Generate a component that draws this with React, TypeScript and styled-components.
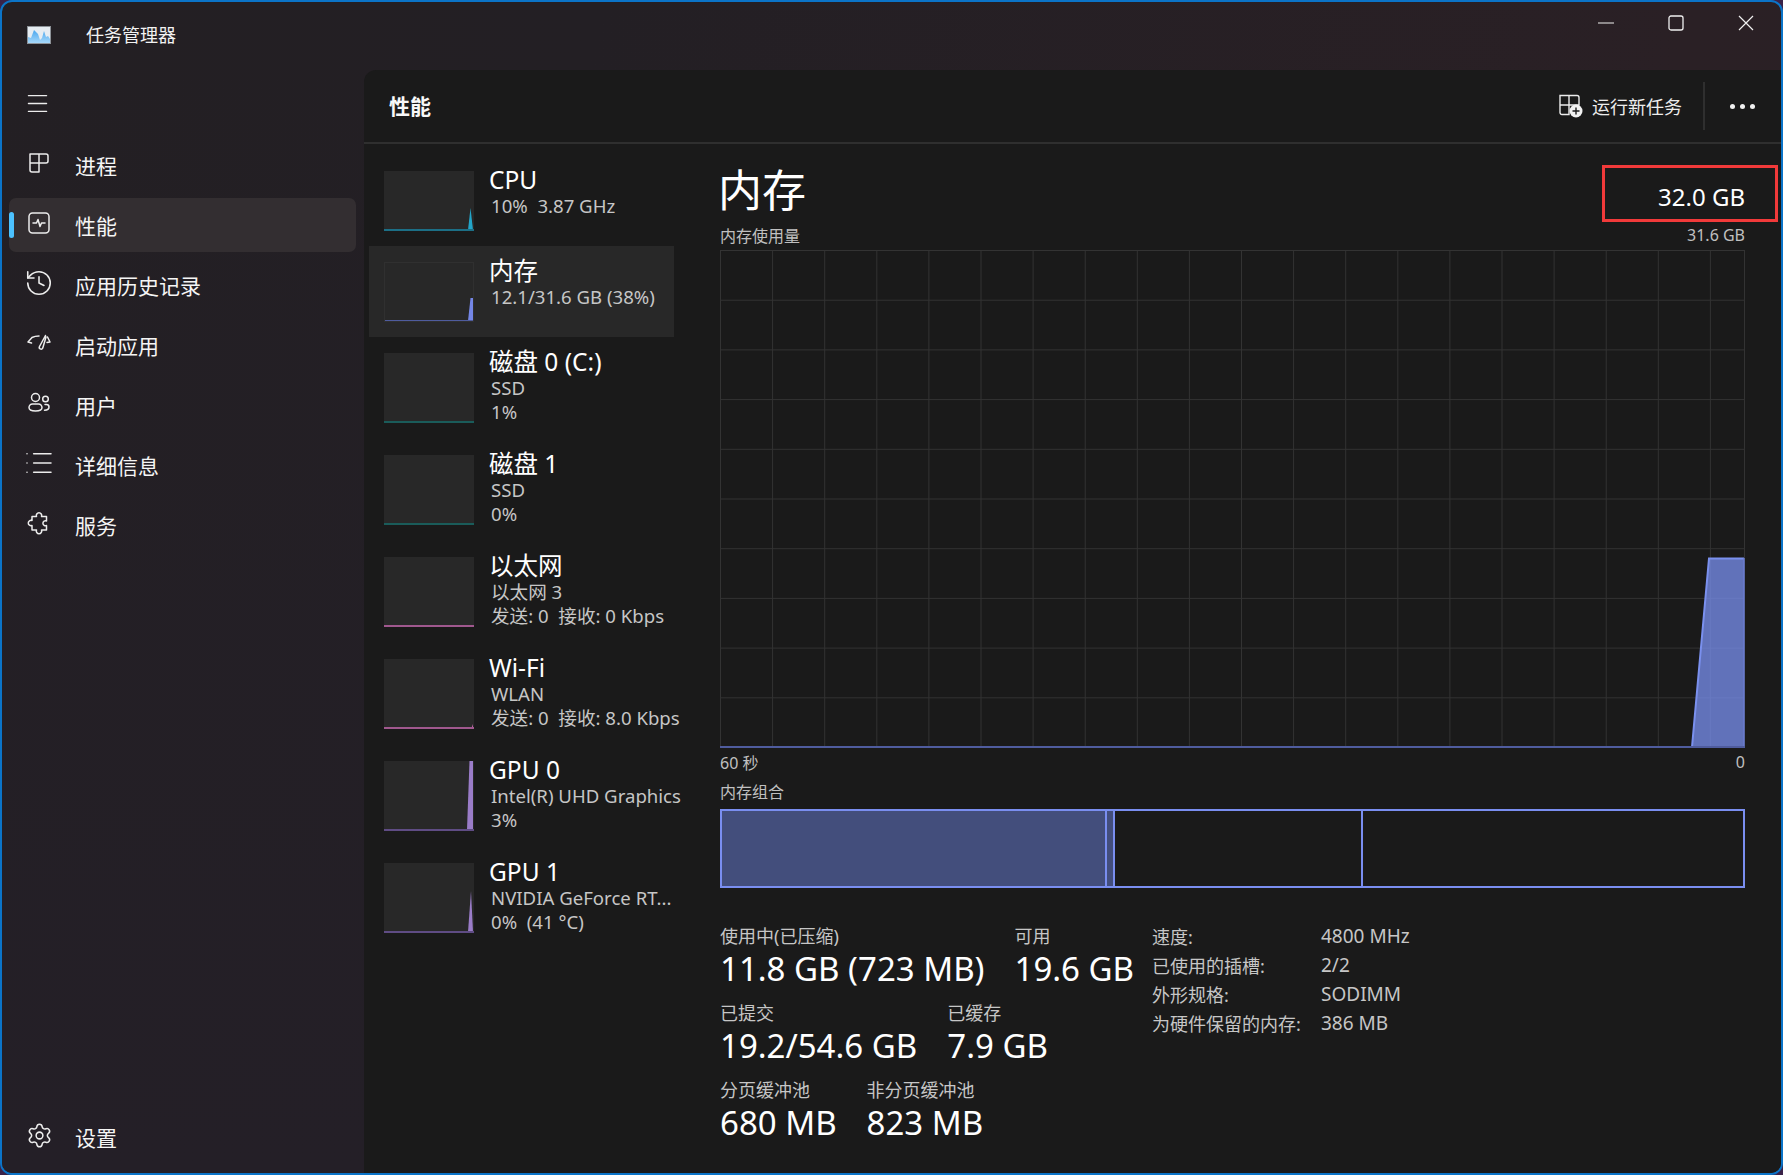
import React from 'react'
import styled, { createGlobalStyle } from 'styled-components'
import { History, List, Settings, Menu } from 'lucide-react'

const GlobalStyle = createGlobalStyle`
    html, body {
        margin: 0;
        padding: 0;
        background: #3a2248;
        overflow: hidden;
    }
    * {
        box-sizing: border-box;
    }
`

type NavEntry = {
    label: string;
    icon: React.ReactNode;
    active?: boolean;
};

type DeviceEntry = {
    name: string;
    lines: Array<string>;
    color: string;
    fill: string;
    points?: string;
    selected?: boolean;
};

const strokeIcon = (children: React.ReactNode) => (
    <svg width="24" height="24" viewBox="0 0 24 24" fill="none" stroke="#ececec" strokeWidth="1.5" strokeLinecap="round" strokeLinejoin="round">
        {children}
    </svg>
)

const navItems: Array<NavEntry> = [
    { label: '进程', icon: strokeIcon(<path d="M3 3h9v18H5a2 2 0 0 1-2-2V3zM3 12h9M12 3h7a2 2 0 0 1 2 2v5a2 2 0 0 1-2 2h-7" />) },
    {
        label: '性能',
        active: true,
        icon: strokeIcon(<>
            <rect x="2" y="2" width="20" height="20" rx="3.5" />
            <polyline points="6,12 9.5,12 11,8.5 13,15.5 14.5,12 18,12" />
        </>),
    },
    { label: '应用历史记录', icon: <History size={30} color="#ececec" strokeWidth={1.25} /> },
    {
        label: '启动应用',
        icon: strokeIcon(<>
            <path d="M1 11l4-4.5c2-1 4-1.5 7-1.5M1 11l3.5 1" />
            <path d="M18.5 4.5 12.5 15.5a1.8 1.8 0 0 0 3.2 1.7L19 6" />
            <path d="M20.5 6 23 11l-3 .5" />
        </>),
    },
    {
        label: '用户',
        icon: strokeIcon(<>
            <circle cx="8.5" cy="6.5" r="4" />
            <path d="M2 16.5a3.5 3.5 0 0 1 3.5-3.5h6a3.5 3.5 0 0 1 3.5 3.5c0 2.2-3 3.5-6.5 3.5S2 18.7 2 16.5z" />
            <circle cx="18.5" cy="8" r="2.8" />
            <path d="M18 13.5h1.5a2.5 2.5 0 0 1 2.5 2.5c0 2-2.2 3.2-4.5 3.2" />
        </>),
    },
    { label: '详细信息', icon: <List size={32} color="#ececec" strokeWidth={1.15} /> },
    {
        label: '服务',
        icon: strokeIcon(<path d="M9.5 5.5a2.7 2.7 0 1 1 5 0H19.5V10a2.5 2.5 0 1 0 0 4.5V19H14.5a2.7 2.7 0 1 1-5 0H5V14.5a2.7 2.7 0 1 1 0-5V5.5z" />),
    },
]

const devices: Array<DeviceEntry> = [
    { name: 'CPU', lines: ['10%  3.87 GHz'], color: '#1c6f86', fill: '#22a5c9', points: '84,59 86.5,37 89,59' },
    { name: '内存', lines: ['12.1/31.6 GB (38%)'], color: '#4f5c9e', fill: '#7486e6', points: '84,59 86.5,36 89,36 89,59', selected: true },
    { name: '磁盘 0 (C:)', lines: ['SSD', '1%'], color: '#1a5c5a', fill: '#1a5c5a' },
    { name: '磁盘 1', lines: ['SSD', '0%'], color: '#1a5c5a', fill: '#1a5c5a' },
    { name: '以太网', lines: ['以太网 3', '发送: 0  接收: 0 Kbps'], color: '#a0588e', fill: '#a0588e' },
    { name: 'Wi-Fi', lines: ['WLAN', '发送: 0  接收: 8.0 Kbps'], color: '#a0588e', fill: '#c468ac', points: '87.5,69 89,65 89,69' },
    { name: 'GPU 0', lines: ['Intel(R) UHD Graphics', '3%'], color: '#5f4c84', fill: '#9a7cc8', points: '83,69 85.5,0 89,0 89,69' },
    { name: 'GPU 1', lines: ['NVIDIA GeForce RT...', '0%  (41 °C)'], color: '#5f4c84', fill: '#9a7cc8', points: '84,69 87,28 89,69' },
]

const verticalGrid = Array.from({ length: 20 }, (_, i) => i * 52.1)
const horizontalGrid = Array.from({ length: 10 }, (_, i) => i * 49.7)

function Thumbnail({ device }: { device: DeviceEntry }) {
    const height = device.lines.length > 1 ? 70 : 60
    return (
        <Thumb $height={height} $selected={device.selected}>
            <svg width="90" height={height} viewBox={`0 0 90 ${height}`}>
                {device.points && <polygon points={device.points} fill={device.fill} />}
                <line x1="0" y1={height - 1} x2="90" y2={height - 1} stroke={device.color} strokeWidth="2" />
            </svg>
        </Thumb>
    )
}

function MemoryGraph() {
    return (
        <svg width="1025" height="498" viewBox="0 0 1025 498">
            {verticalGrid.map((x) => (
                <line key={x} x1={x + 0.5} y1="0" x2={x + 0.5} y2="497" stroke="#333333" strokeWidth="1" />
            ))}
            <line x1="1024.5" y1="0" x2="1024.5" y2="497" stroke="#333333" strokeWidth="1" />
            {horizontalGrid.map((y) => (
                <line key={y} x1="0" y1={y + 0.5} x2="1025" y2={y + 0.5} stroke="#333333" strokeWidth="1" />
            ))}
            <polygon points="972,497 989,308.5 1024,308.5 1024,497" fill="#7a90f0" fillOpacity="0.75" />
            <polyline points="972,497 989,308.5 1024,308.5" fill="none" stroke="#7a90ee" strokeWidth="2" />
            <line x1="1024" y1="308" x2="1024" y2="497" stroke="#6a7dd0" strokeWidth="1.5" />
            <line x1="0" y1="497" x2="1025" y2="497" stroke="#4f5c9e" strokeWidth="2" />
        </svg>
    )
}

export default function App() {
    return (
        <Window>
            <GlobalStyle />
            <TitleBar>
                <AppIcon>
                    <svg width="24" height="18" viewBox="0 0 24 18">
                        <defs>
                            <linearGradient id="logoFill" x1="0" y1="0" x2="0" y2="1">
                                <stop offset="0" stopColor="#4aa6ee" />
                                <stop offset="1" stopColor="#a6d8fa" />
                            </linearGradient>
                        </defs>
                        <rect x="0.5" y="0.5" width="23" height="17" fill="#e6ecf2" stroke="#8d9298" />
                        <polygon points="1,17 1,11 4,12 7,4 9,6 11,8 13,14 15,12 17,5 19,11 21,10 23,13 23,17" fill="url(#logoFill)" />
                    </svg>
                </AppIcon>
                <AppTitle>任务管理器</AppTitle>
                <WindowControls>
                    <ControlButton>
                        <svg width="16" height="16" viewBox="0 0 16 16"><line x1="0" y1="8" x2="16" y2="8" stroke="#f0f0f0" strokeWidth="1.2" /></svg>
                    </ControlButton>
                    <ControlButton>
                        <svg width="16" height="16" viewBox="0 0 16 16"><rect x="1" y="1" width="14" height="14" rx="2" fill="none" stroke="#f0f0f0" strokeWidth="1.3" /></svg>
                    </ControlButton>
                    <ControlButton>
                        <svg width="16" height="16" viewBox="0 0 16 16"><path d="M1 1l14 14M15 1L1 15" stroke="#f0f0f0" strokeWidth="1.2" /></svg>
                    </ControlButton>
                </WindowControls>
            </TitleBar>
            <Body>
                <Sidebar>
                    <Hamburger><Menu size={27} color="#ececec" strokeWidth={1.3} /></Hamburger>
                    <NavList>
                        {navItems.map((item) => (
                            <NavItem key={item.label} $active={item.active}>
                                <NavIcon>{item.icon}</NavIcon>
                                <span>{item.label}</span>
                            </NavItem>
                        ))}
                    </NavList>
                    <SettingsSlot>
                        <NavItem>
                            <NavIcon><Settings size={27} color="#ececec" strokeWidth={1.35} /></NavIcon>
                            <span>设置</span>
                        </NavItem>
                    </SettingsSlot>
                </Sidebar>
                <Panel>
                    <PanelHeader>
                        <PanelTitle>性能</PanelTitle>
                        <RunTask>
                            <svg width="24" height="24" viewBox="0 0 24 24" fill="none">
                                <path d="M1 1.5h9v19H3a2 2 0 0 1-2-2V1.5zM1 11h9M10 1.5h8a2 2 0 0 1 2 2V11h-10" stroke="#ececec" strokeWidth="1.4" />
                                <circle cx="17" cy="17" r="6.5" fill="#f2f2f2" />
                                <path d="M17 13.5v7M13.5 17h7" stroke="#1a1a1a" strokeWidth="1.4" />
                            </svg>
                            <span>运行新任务</span>
                        </RunTask>
                        <HeaderDivider />
                        <MoreDots><Dot /><Dot /><Dot /></MoreDots>
                    </PanelHeader>
                    <PanelBody>
                        <DeviceList>
                            {devices.map((device) => (
                                <DeviceRow key={device.name} $selected={device.selected} $tall={device.lines.length > 1}>
                                    <Thumbnail device={device} />
                                    <DeviceText>
                                        <DeviceName>{device.name}</DeviceName>
                                        {device.lines.map((line) => (
                                            <DeviceLine key={line}>{line}</DeviceLine>
                                        ))}
                                    </DeviceText>
                                </DeviceRow>
                            ))}
                        </DeviceList>
                        <Detail>
                            <HeadingRow>
                                <Heading>内存</Heading>
                                <Capacity>32.0 GB</Capacity>
                                <RedBox />
                            </HeadingRow>
                            <CaptionRow>
                                <span>内存使用量</span>
                                <span>31.6 GB</span>
                            </CaptionRow>
                            <GraphFrame><MemoryGraph /></GraphFrame>
                            <AxisRow>
                                <span>60 秒</span>
                                <span>0</span>
                            </AxisRow>
                            <CompositionLabel>内存组合</CompositionLabel>
                            <CompositionBar>
                                <BarSegment $width={385} $used />
                                <BarSegment $width={8} $used />
                                <BarSegment $width={248} />
                                <BarSegment $grow />
                            </CompositionBar>
                            <Stats>
                                <StatColumn>
                                    <StatRow>
                                        <Stat><StatLabel>使用中(已压缩)</StatLabel><StatValue>11.8 GB (723 MB)</StatValue></Stat>
                                        <Stat><StatLabel>可用</StatLabel><StatValue>19.6 GB</StatValue></Stat>
                                    </StatRow>
                                    <StatRow>
                                        <Stat><StatLabel>已提交</StatLabel><StatValue>19.2/54.6 GB</StatValue></Stat>
                                        <Stat><StatLabel>已缓存</StatLabel><StatValue>7.9 GB</StatValue></Stat>
                                    </StatRow>
                                    <StatRow>
                                        <Stat><StatLabel>分页缓冲池</StatLabel><StatValue>680 MB</StatValue></Stat>
                                        <Stat><StatLabel>非分页缓冲池</StatLabel><StatValue>823 MB</StatValue></Stat>
                                    </StatRow>
                                </StatColumn>
                                <Properties>
                                    <span>速度:</span><PropValue>4800 MHz</PropValue>
                                    <span>已使用的插槽:</span><PropValue>2/2</PropValue>
                                    <span>外形规格:</span><PropValue>SODIMM</PropValue>
                                    <span>为硬件保留的内存:</span><PropValue>386 MB</PropValue>
                                </Properties>
                            </Stats>
                        </Detail>
                    </PanelBody>
                </Panel>
            </Body>
        </Window>
    )
}

const Window = styled.div`
    width: 1783px;
    height: 1175px;
    display: flex;
    flex-direction: column;
    border: 2px solid #0b74c8;
    border-radius: 12px;
    overflow: hidden;
    background: linear-gradient(100deg, #231f23 0%, #231f24 30%, #2a2025 85%, #2a2024 100%);
    color: #ffffff;
    font-family: "Noto Sans", "Noto Sans CJK SC", sans-serif;
`

const TitleBar = styled.div`
    height: 68px;
    display: flex;
    align-items: center;
    padding-left: 25px;
    flex-shrink: 0;
`

const AppIcon = styled.div`
    width: 24px;
    height: 18px;
    display: flex;
    margin-top: -2px;
`

const AppTitle = styled.div`
    margin-left: 35px;
    font-size: 18px;
    margin-top: -4px;
    color: #f2f2f2;
`

const WindowControls = styled.div`
    margin-left: auto;
    display: flex;
    align-self: flex-start;
    padding-top: 13px;
    padding-right: 27px;
    gap: 54px;
`

const ControlButton = styled.div`
    width: 16px;
    height: 16px;
    display: flex;
`

const Body = styled.div`
    flex: 1;
    display: flex;
    min-height: 0;
`

const Sidebar = styled.div`
    width: 362px;
    flex-shrink: 0;
    display: flex;
    flex-direction: column;
    padding: 0 7px 9px;
    background: linear-gradient(180deg, transparent 0%, #241f27 100%);
`

const Hamburger = styled.div`
    height: 68px;
    padding: 0 0 2px 15px;
    display: flex;
    align-items: center;
`

const NavList = styled.div`
    display: flex;
    flex-direction: column;
    gap: 6px;
`

const NavItem = styled.div<{ $active?: boolean }>`
    position: relative;
    width: 347px;
    height: 54px;
    display: flex;
    align-items: center;
    padding-left: 18px;
    gap: 24px;
    font-size: 21px;
    color: #f5f5f5;
    border-radius: 7px;
    background: ${(p) => (p.$active ? '#332e31' : 'transparent')};
    &::before {
        content: '';
        display: ${(p) => (p.$active ? 'block' : 'none')};
        position: absolute;
        left: 0;
        top: 14px;
        bottom: 14px;
        width: 5px;
        border-radius: 3px;
        background: #4cc2ff;
    }
`

const NavIcon = styled.div`
    width: 24px;
    height: 26px;
    display: flex;
    align-items: center;
    justify-content: center;
    margin-top: -4px;
    svg {
        flex-shrink: 0;
    }
`

const SettingsSlot = styled.div`
    margin-top: auto;
`

const Panel = styled.div`
    flex: 1;
    display: flex;
    flex-direction: column;
    background: #1a1a1a;
    border-top-left-radius: 12px;
    min-width: 0;
`

const PanelHeader = styled.div`
    height: 74px;
    display: flex;
    align-items: center;
    padding: 0 0 0 25px;
    border-bottom: 2px solid #2f2f2f;
`

const PanelTitle = styled.div`
    font-size: 21px;
    font-weight: 600;
    margin-top: -2px;
    color: #f8f8f8;
`

const RunTask = styled.div`
    margin-left: auto;
    display: flex;
    align-items: center;
    gap: 9px;
    font-size: 18px;
    color: #ededed;
`

const HeaderDivider = styled.div`
    width: 2px;
    height: 48px;
    margin-left: 21px;
    background: #2f2f2f;
`

const MoreDots = styled.div`
    display: flex;
    gap: 5px;
    margin-left: 25px;
    margin-right: 26px;
`

const Dot = styled.div`
    width: 5px;
    height: 5px;
    border-radius: 50%;
    background: #f0f0f0;
`

const PanelBody = styled.div`
    flex: 1;
    display: flex;
    min-height: 0;
`

const DeviceList = styled.div`
    width: 356px;
    flex-shrink: 0;
    padding: 11px 0 0 5px;
    display: flex;
    flex-direction: column;
`

const DeviceRow = styled.div<{ $selected?: boolean; $tall?: boolean }>`
    width: 305px;
    height: ${(p) => (p.$tall ? 102 : 91)}px;
    display: flex;
    padding-left: 15px;
    background: ${(p) => (p.$selected ? '#282828' : 'transparent')};
`

const Thumb = styled.div<{ $height: number; $selected?: boolean }>`
    width: 90px;
    height: ${(p) => p.$height}px;
    margin-top: 16px;
    flex-shrink: 0;
    display: flex;
    background: #282828;
    outline: ${(p) => (p.$selected ? '1px solid #303030' : 'none')};
    outline-offset: -1px;
`

const DeviceText = styled.div`
    padding: 12px 0 0 15px;
    white-space: pre;
`

const DeviceName = styled.div`
    font-size: 24.5px;
    line-height: 26px;
    margin-bottom: 1px;
    color: #ffffff;
`

const DeviceLine = styled.div`
    font-size: 18.6px;
    line-height: 24px;
    padding-left: 2px;
    color: #c6c6c6;
`

const Detail = styled.div`
    width: 1025px;
    flex-shrink: 0;
    padding-top: 22px;
    display: flex;
    flex-direction: column;
`

const HeadingRow = styled.div`
    position: relative;
    height: 48px;
    display: flex;
    align-items: center;
    justify-content: space-between;
`

const Heading = styled.div`
    font-size: 44px;
    line-height: 48px;
    margin-left: -2px;
    color: #ffffff;
`

const Capacity = styled.div`
    font-size: 24px;
    margin-top: 12px;
    color: #ffffff;
`

const RedBox = styled.div`
    position: absolute;
    right: -33px;
    top: -1px;
    width: 176px;
    height: 57px;
    border: 3px solid #f23a3a;
`

const CaptionRow = styled.div`
    height: 22px;
    margin-top: 10px;
    margin-bottom: 4px;
    display: flex;
    align-items: center;
    justify-content: space-between;
    font-size: 16px;
    color: #c0c0c0;
`

const GraphFrame = styled.div`
    width: 1025px;
    height: 498px;
    display: flex;
`

const AxisRow = styled.div`
    height: 22px;
    margin-top: 3px;
    display: flex;
    align-items: center;
    justify-content: space-between;
    font-size: 16px;
    color: #c0c0c0;
`

const CompositionLabel = styled.div`
    height: 22px;
    margin-top: 7px;
    display: flex;
    align-items: center;
    font-size: 16px;
    color: #c0c0c0;
`

const CompositionBar = styled.div`
    height: 79px;
    margin-top: 7px;
    display: flex;
    border: 2px solid #7a8ef0;
`

const BarSegment = styled.div<{ $width?: number; $used?: boolean; $grow?: boolean }>`
    ${(p) => (p.$grow ? 'flex: 1;' : `width: ${p.$width}px;`)}
    background: ${(p) => (p.$used ? '#434e7c' : 'transparent')};
    &:not(:last-child) {
        border-right: 2px solid #7a8ef0;
    }
`

const Stats = styled.div`
    margin-top: 35px;
    display: flex;
`

const StatColumn = styled.div`
    width: 432px;
    display: flex;
    flex-direction: column;
    gap: 11px;
`

const StatRow = styled.div`
    display: flex;
    gap: 30px;
`

const Stat = styled.div`
    display: flex;
    flex-direction: column;
`

const StatLabel = styled.div`
    font-size: 18px;
    line-height: 26px;
    color: #c6c6c6;
`

const StatValue = styled.div`
    font-size: 33px;
    line-height: 40px;
    color: #ffffff;
    white-space: nowrap;
`

const Properties = styled.div`
    display: grid;
    grid-template-columns: 169px auto;
    grid-auto-rows: 29px;
    align-content: start;
    align-items: center;
    justify-content: start;
    margin-top: -2px;
    font-size: 18px;
    color: #c6c6c6;
`

const PropValue = styled.span`
    font-size: 19px;
`
